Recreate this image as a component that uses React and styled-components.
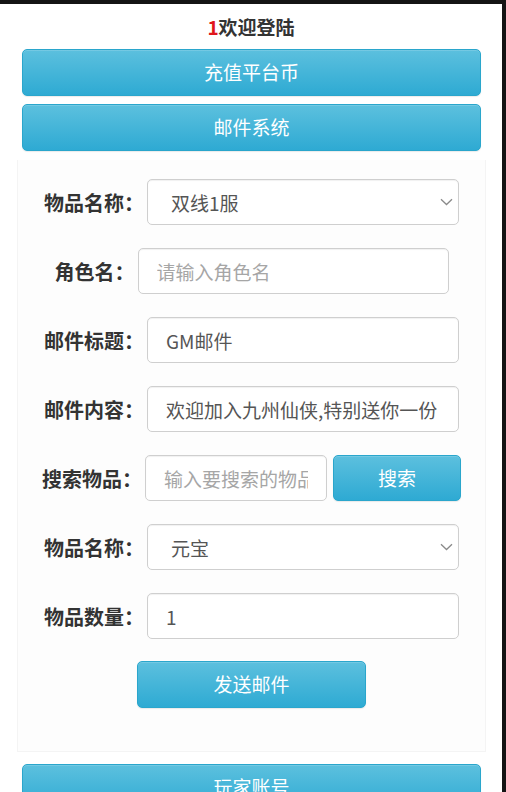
import React from "react";
import styled, { createGlobalStyle, css } from "styled-components";

const Global = createGlobalStyle`
  html, body { margin: 0; padding: 0; background: #141414; }
  body { font-family: "Noto Sans CJK SC", "Noto Sans", "Liberation Sans", sans-serif; }
  * { box-sizing: border-box; }
`;

const Page = styled.div`
  margin-top: 4px;
  width: 502px;
  height: 788px;
  overflow: hidden;
  background: #ffffff;
`;

const Title = styled.div`
  height: 45px;
  display: flex;
  align-items: center;
  justify-content: center;
  font-size: 19px;
  font-weight: 700;
  color: #333;
`;

const Red = styled.span`
  color: #e0161b;
`;

const infoBtn = css`
  border: 1px solid #2aa6cc;
  border-radius: 5px;
  background: linear-gradient(to bottom, #5cc0de 0%, #2eaad3 100%);
  color: #fff;
  font-family: inherit;
  font-size: 19px;
  display: flex;
  align-items: center;
  justify-content: center;
  box-shadow: inset 0 1px 0 rgba(255,255,255,0.15), 0 1px 1px rgba(0,0,0,0.08);
  cursor: pointer;
  padding: 0 0 2px;
`;

const NavButton = styled.button`
  ${infoBtn}
  width: 459px;
  height: 47px;
  margin: 0 0 8px 22px;
`;

const Panel = styled.div`
  margin: 9px 16px 12px 17px;
  padding: 19px 0 43px;
  background: #fdfdfd;
  border: 1px solid #f4f4f4;
  border-top: none;
`;

const Row = styled.div`
  display: flex;
  justify-content: center;
  align-items: center;
  height: 46px;
  margin-bottom: 23px;
`;

const Label = styled.label`
  font-size: 20px;
  font-weight: 700;
  color: #333;
  white-space: nowrap;
  margin-right: 3px;
`;

const fieldBase = css`
  height: 46px;
  border: 1px solid #cfcfcf;
  border-radius: 5px;
  background: #fff;
  font-family: inherit;
  font-size: 19px;
  color: #555;
  box-shadow: inset 0 1px 1px rgba(0,0,0,0.06);
  outline: none;
  &::placeholder { color: #a6a6a6; }
`;

const Input = styled.input`
  ${fieldBase}
  width: ${(p) => p.$w || 312}px;
  padding: 0 18px;
`;

const SelectWrap = styled.div`
  position: relative;
  width: 312px;
  height: 46px;
`;

const Select = styled.select`
  ${fieldBase}
  appearance: none;
  -webkit-appearance: none;
  width: 100%;
  padding: 0 23px;
`;

const Chevron = styled.svg`
  position: absolute;
  right: 6px;
  top: 19px;
  pointer-events: none;
`;

const SearchButton = styled.button`
  ${infoBtn}
  width: 128px;
  height: 46px;
  margin-left: 6px;
`;

const SendRow = styled.div`
  display: flex;
  justify-content: center;
`;

const SendButton = styled.button`
  ${infoBtn}
  width: 229px;
  height: 47px;
  margin-top: -1px;
`;

function Dropdown({ value }) {
  return (
    <SelectWrap>
      <Select defaultValue={value}>
        <option>{value}</option>
      </Select>
      <Chevron width="13" height="8" viewBox="0 0 13 8">
        <path d="M1 1.2 L6.5 6.5 L12 1.2" fill="none" stroke="#8a8a8a" strokeWidth="1.3" />
      </Chevron>
    </SelectWrap>
  );
}

export default function App() {
  return (
    <>
      <Global />
      <Page>
        <Title>
          <Red>1</Red>欢迎登陆
        </Title>
        <NavButton>充值平台币</NavButton>
        <NavButton>邮件系统</NavButton>
        <Panel>
          <Row>
            <Label>物品名称：</Label>
            <Dropdown value="双线1服" />
          </Row>
          <Row>
            <Label>角色名：</Label>
            <Input $w={311} placeholder="请输入角色名" />
          </Row>
          <Row>
            <Label>邮件标题：</Label>
            <Input defaultValue="GM邮件" />
          </Row>
          <Row>
            <Label>邮件内容：</Label>
            <Input defaultValue="欢迎加入九州仙侠,特别送你一份" />
          </Row>
          <Row>
            <Label>搜索物品：</Label>
            <Input $w={182} placeholder="输入要搜索的物品名称" />
            <SearchButton>搜索</SearchButton>
          </Row>
          <Row>
            <Label>物品名称：</Label>
            <Dropdown value="元宝" />
          </Row>
          <Row>
            <Label>物品数量：</Label>
            <Input defaultValue="1" />
          </Row>
          <SendRow>
            <SendButton>发送邮件</SendButton>
          </SendRow>
        </Panel>
        <NavButton>玩家账号</NavButton>
      </Page>
    </>
  );
}
